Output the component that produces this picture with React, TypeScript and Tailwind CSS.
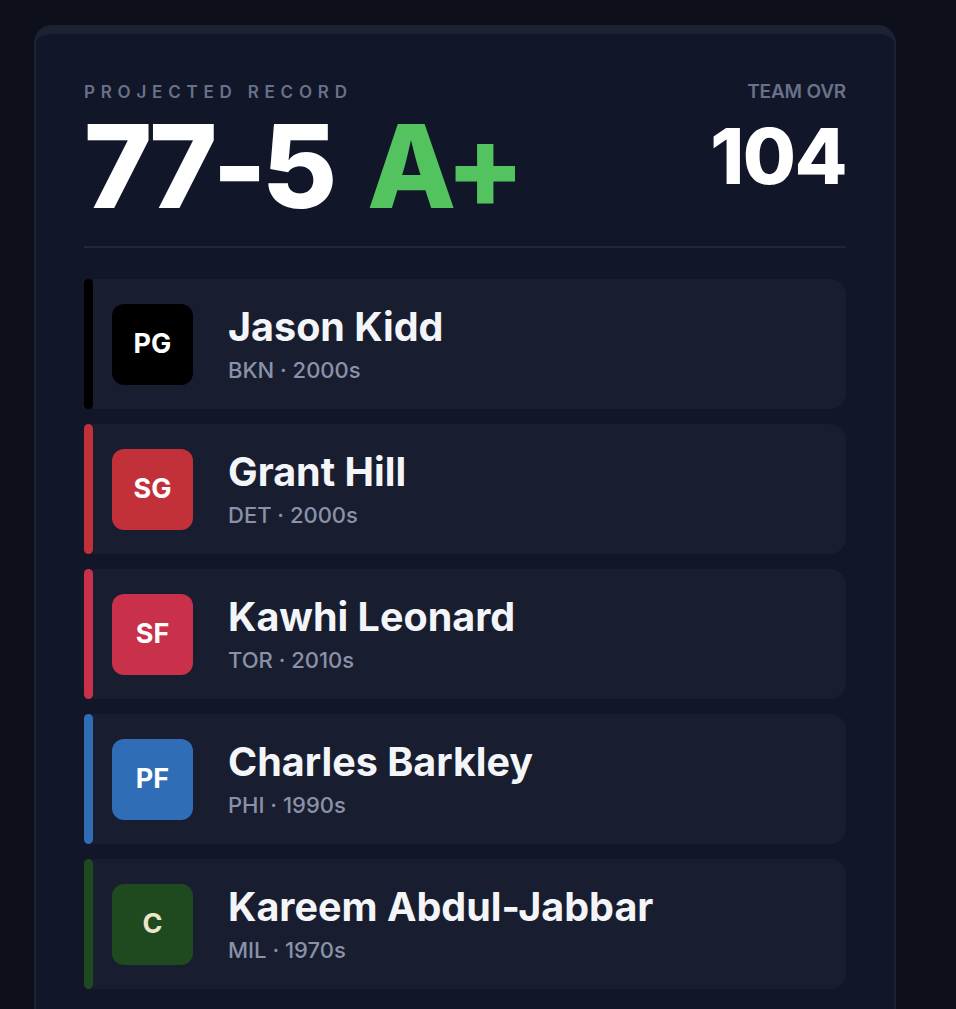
import React from "react";

const players = [
  { pos: "PG", name: "Jason Kidd", sub: "BKN · 2000s", color: "bg-[#000000]", bar: "bg-[#000000]", text: "text-white" },
  { pos: "SG", name: "Grant Hill", sub: "DET · 2000s", color: "bg-[#c2303a]", bar: "bg-[#c2303a]", text: "text-white" },
  { pos: "SF", name: "Kawhi Leonard", sub: "TOR · 2010s", color: "bg-[#c9304a]", bar: "bg-[#c9304a]", text: "text-white" },
  { pos: "PF", name: "Charles Barkley", sub: "PHI · 1990s", color: "bg-[#2f6db6]", bar: "bg-[#2f6db6]", text: "text-white" },
  { pos: "C", name: "Kareem Abdul-Jabbar", sub: "MIL · 1970s", color: "bg-[#1f4a20]", bar: "bg-[#1f4a20]", text: "text-[#ebe6c8]" },
];

export default function App() {
  return (
    <div
      className="min-h-[1009px] w-[956px] overflow-hidden bg-[#0d101a] pt-[25px] pl-[34px]"
      style={{ fontFamily: "Inter, 'Noto Sans', sans-serif" }}
    >
      <div className="w-[862px] h-[1000px] rounded-[18px] border-x-2 border-t-[9px] border-[#1d2232] bg-[#111729] px-[48px] pt-[48px]">
        <div className="flex justify-between">
          <div>
            <div className="text-[17px] font-semibold leading-[20px] tracking-[0.34em] text-[#69718a]">PROJECTED RECORD</div>
            <div className="mt-[6px] flex items-baseline text-[116px] font-extrabold leading-[116px] tracking-[-0.045em]">
              <span className="text-white">77-5</span>
              <span className="ml-[35px] tracking-[-0.06em] text-[#52c35e]">A+</span>
            </div>
          </div>
          <div className="flex flex-col items-end">
            <div className="text-[19px] font-semibold leading-[20px] tracking-[-0.01em] text-[#69718a]">TEAM OVR</div>
            <div className="mt-[18px] text-[77px] font-extrabold leading-[72px] tracking-[-0.02em] text-white">104</div>
          </div>
        </div>
        <div className="mt-[22px] h-[2px] bg-[#212738]" />
        <div className="mt-[31px] flex flex-col gap-[15px]">
          {players.map((p) => (
            <div key={p.pos} className="flex h-[130px]">
              <div className={`w-[9px] rounded-full ${p.bar}`} />
              <div className="flex flex-1 items-center rounded-r-[16px] bg-[#181e2f] pl-[19px]">
                <div className={`flex h-[81px] w-[81px] items-center justify-center rounded-[12px] ${p.color}`}>
                  <span className={`text-[27px] font-bold ${p.text}`}>{p.pos}</span>
                </div>
                <div className="ml-[35px] flex flex-col">
                  <div className="text-[39.5px] font-bold leading-[42px] text-[#f4f5f8]">{p.name}</div>
                  <div className="mt-[9px] text-[22px] font-medium leading-[26px] text-[#8a91a8]">{p.sub}</div>
                </div>
              </div>
            </div>
          ))}
        </div>
      </div>
    </div>
  );
}
